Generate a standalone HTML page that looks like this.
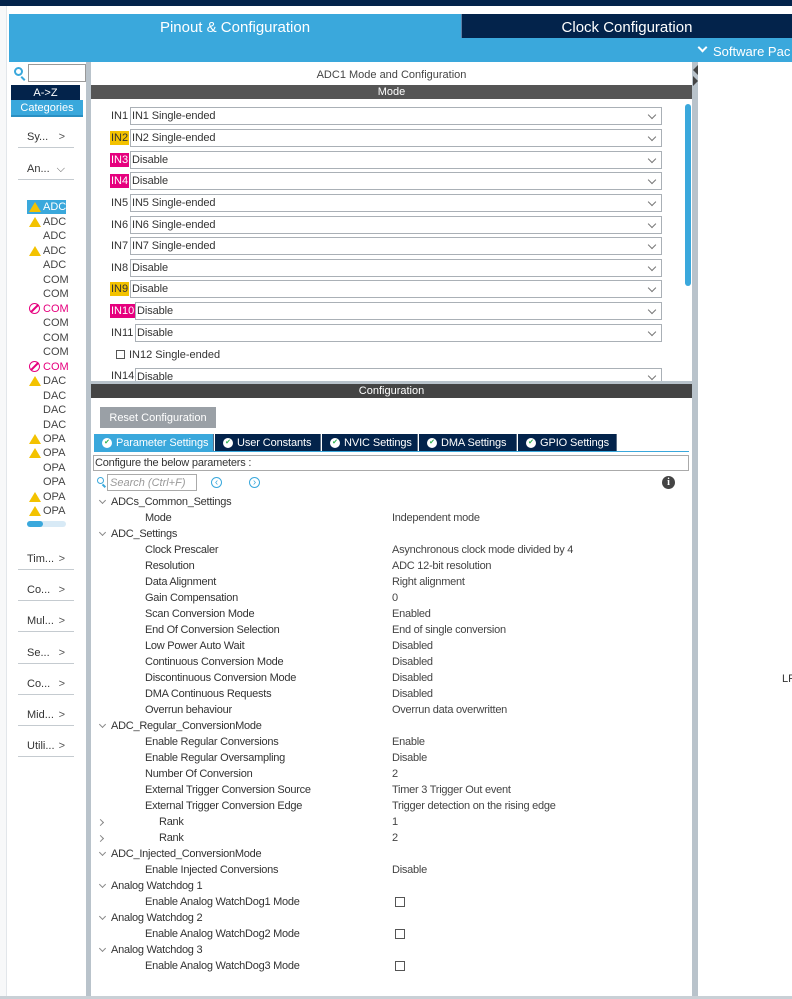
<!DOCTYPE html>
<html><head><meta charset="utf-8"><style>
*{margin:0;padding:0;box-sizing:border-box}
body{width:792px;height:999px;overflow:hidden;background:#fff;font-family:"Liberation Sans",Arial,sans-serif;font-size:11px;color:#333;position:relative}
.a{position:absolute}
.t{position:absolute;white-space:nowrap;line-height:14px}
.dd{position:absolute;left:130px;width:532px;height:18px;border:1px solid #aab0b6;background:#fff;line-height:17px;padding-left:1px;font-size:11px;letter-spacing:-0.1px}
.dd:after{content:"";position:absolute;right:6px;top:4px;width:5px;height:5px;border-right:1px solid #777;border-bottom:1px solid #777;transform:rotate(45deg)}
.lab{position:absolute;height:14px;line-height:15px;font-size:11px;padding:0 1px}
.cat{position:absolute;left:18px;width:56px;border-bottom:1px solid #c5cbd0;height:22px;font-size:11px;color:#333;padding-left:9px;line-height:22px}
.cat b{position:absolute;right:9px;top:0;font-weight:normal;color:#555}
.li{position:absolute;left:43px;font-size:11px;line-height:15px;color:#444}
.w{position:absolute;left:29px;width:0;height:0;border-left:6px solid transparent;border-right:6px solid transparent;border-bottom:10px solid #f3c200}
.n{position:absolute;left:29px;width:11px;height:11px;border:1.5px solid #e6007e;border-radius:50%}
.n:after{content:"";position:absolute;left:4px;top:-1px;width:1.5px;height:10px;background:#e6007e;transform:rotate(45deg)}
.tab{position:absolute;top:434px;height:18px;background:#03234b;color:#fff;font-size:11px;line-height:19px;padding-left:22px;border-right:1px solid #5a6d85;letter-spacing:-0.1px}
.tab:before{content:"✔";position:absolute;left:8px;top:4px;width:10px;height:10px;border-radius:50%;background:#fff;color:#2bb24c;font-size:7px;line-height:10px;text-align:center}
.r{position:absolute;white-space:nowrap;font-size:11px;line-height:15px;color:#333;letter-spacing:-0.25px}
.v{position:absolute;left:392px;white-space:nowrap;font-size:11px;line-height:15px;color:#444;letter-spacing:-0.25px}
.cv{position:absolute;left:100px;width:5px;height:5px;border-right:1px solid #888;border-bottom:1px solid #888;transform:rotate(45deg)}
.cr{position:absolute;left:98px;width:5px;height:5px;border-right:1px solid #888;border-bottom:1px solid #888;transform:rotate(-45deg)}
.cb{position:absolute;left:395px;width:10px;height:10px;border:1px solid #555}
</style></head><body>
<div class="a" style="left:0;top:0;width:792px;height:6px;background:#03234b"></div>
<div class="a" style="left:0;top:6px;width:7px;height:993px;background:#f7f8f9;border-right:1px solid #e2e6ea"></div>
<div class="a" style="left:9px;top:14px;width:452px;height:24px;background:#3aa8dc;color:#fff;font-size:15px;text-align:center;line-height:28px">Pinout &amp; Configuration</div>
<div class="a" style="left:461px;top:14px;width:331px;height:24px;background:#03234b;color:#fff;font-size:15px;text-align:center;line-height:28px;border-left:1px solid #5a80a8">Clock Configuration</div>
<div class="a" style="left:9px;top:38px;width:783px;height:24px;background:#3aa8dc"></div>
<div class="a" style="left:699px;top:44px;width:7px;height:7px;border-right:2px solid #fff;border-bottom:2px solid #fff;transform:rotate(45deg)"></div>
<div class="t" style="left:713px;top:45px;color:#fff;font-size:13px">Software Pac</div>
<!-- left panel -->
<div class="a" style="left:9px;top:62px;width:77px;height:934px;background:#fff"></div>
<div class="a" style="left:14px;top:67px;width:9px;height:9px;border:2px solid #3aa8dc;border-radius:50%"></div>
<div class="a" style="left:22px;top:76px;width:2px;height:5px;background:#3aa8dc;transform:rotate(-45deg)"></div>
<div class="a" style="left:28px;top:64px;width:58px;height:18px;border:1px solid #999;background:#fff"></div>
<div class="a" style="left:11px;top:85px;width:69px;height:15px;background:#03234b;color:#fff;text-align:center;line-height:16px;font-size:11px">A-&gt;Z</div>
<div class="a" style="left:11px;top:100px;width:72px;height:17px;background:#3aa8dc;color:#fff;text-align:center;line-height:17px;font-size:11px;border-bottom:2px solid #2a8fc2">Categories</div>
<div class="cat" style="top:126px">Sy... <b>&gt;</b></div>
<div class="cat" style="top:158px">An... <b>⌵</b></div>
<div class="a" style="left:27px;top:200px;width:39px;height:14px;background:#3aa8dc"></div>
<div class="w" style="top:202px"></div><div class="li" style="top:200px;color:#fff">ADC</div>
<div class="w" style="top:217px"></div><div class="li" style="top:215px">ADC</div>
<div class="li" style="top:229px">ADC</div>
<div class="w" style="top:246px"></div><div class="li" style="top:244px">ADC</div>
<div class="li" style="top:258px">ADC</div>
<div class="li" style="top:273px">COM</div>
<div class="li" style="top:287px">COM</div>
<div class="n" style="top:303px"></div><div class="li" style="top:302px;color:#e6007e">COM</div>
<div class="li" style="top:316px">COM</div>
<div class="li" style="top:331px">COM</div>
<div class="li" style="top:345px">COM</div>
<div class="n" style="top:361px"></div><div class="li" style="top:360px;color:#e6007e">COM</div>
<div class="w" style="top:376px"></div><div class="li" style="top:374px">DAC</div>
<div class="li" style="top:389px">DAC</div>
<div class="li" style="top:403px">DAC</div>
<div class="li" style="top:418px">DAC</div>
<div class="w" style="top:434px"></div><div class="li" style="top:432px">OPA</div>
<div class="w" style="top:448px"></div><div class="li" style="top:446px">OPA</div>
<div class="li" style="top:461px">OPA</div>
<div class="li" style="top:475px">OPA</div>
<div class="w" style="top:492px"></div><div class="li" style="top:490px">OPA</div>
<div class="w" style="top:506px"></div><div class="li" style="top:504px">OPA</div>
<div class="a" style="left:27px;top:521px;width:39px;height:6px;background:#d8eaf6;border-radius:3px"></div>
<div class="a" style="left:27px;top:521px;width:16px;height:6px;background:#3aa8dc;border-radius:3px"></div>
<div class="cat" style="top:548px">Tim... <b>&gt;</b></div>
<div class="cat" style="top:579px">Co... <b>&gt;</b></div>
<div class="cat" style="top:610px">Mul... <b>&gt;</b></div>
<div class="cat" style="top:642px">Se... <b>&gt;</b></div>
<div class="cat" style="top:673px">Co... <b>&gt;</b></div>
<div class="cat" style="top:704px">Mid... <b>&gt;</b></div>
<div class="cat" style="top:735px">Utili... <b>&gt;</b></div>
<!-- separators -->
<div class="a" style="left:86px;top:62px;width:5px;height:934px;background:#b9c3cb"></div>
<div class="a" style="left:692px;top:62px;width:6px;height:934px;background:#b9c3cb"></div>
<div class="a" style="left:693px;top:65px;width:0;height:0;border-top:5px solid transparent;border-bottom:5px solid transparent;border-right:5px solid #444"></div>
<div class="a" style="left:693px;top:76px;width:0;height:0;border-top:5px solid transparent;border-bottom:5px solid transparent;border-left:5px solid #444"></div>
<div class="a" style="left:0;top:996px;width:792px;height:3px;background:#c9d0d6"></div>
<!-- mode panel -->
<div class="t" style="left:91px;width:601px;top:68px;text-align:center;color:#444">ADC1 Mode and Configuration</div>
<div class="a" style="left:91px;top:85px;width:601px;height:14px;background:#555;color:#fff;text-align:center;line-height:15px">Mode</div>
<div class="a" style="left:685px;top:104px;width:6px;height:182px;background:#3aa8dc;border-radius:3px"></div>
<div class="lab" style="left:110px;top:109px">IN1</div><div class="dd" style="top:107px">IN1 Single-ended</div>
<div class="lab" style="left:110px;top:131px;background:#f3c200">IN2</div><div class="dd" style="top:129px">IN2 Single-ended</div>
<div class="lab" style="left:110px;top:153px;background:#e6007e;color:#fff">IN3</div><div class="dd" style="top:151px">Disable</div>
<div class="lab" style="left:110px;top:174px;background:#e6007e;color:#fff">IN4</div><div class="dd" style="top:172px">Disable</div>
<div class="lab" style="left:110px;top:196px">IN5</div><div class="dd" style="top:194px">IN5 Single-ended</div>
<div class="lab" style="left:110px;top:218px">IN6</div><div class="dd" style="top:216px">IN6 Single-ended</div>
<div class="lab" style="left:110px;top:239px">IN7</div><div class="dd" style="top:237px">IN7 Single-ended</div>
<div class="lab" style="left:110px;top:261px">IN8</div><div class="dd" style="top:259px">Disable</div>
<div class="lab" style="left:110px;top:282px;background:#f3c200">IN9</div><div class="dd" style="top:280px">Disable</div>
<div class="lab" style="left:110px;top:304px;background:#e6007e;color:#fff">IN10</div><div class="dd" style="top:302px;left:135px;width:527px">Disable</div>
<div class="lab" style="left:110px;top:326px">IN11</div><div class="dd" style="top:324px;left:135px;width:527px">Disable</div>
<div class="a" style="left:116px;top:350px;width:9px;height:9px;border:1px solid #555"></div>
<div class="t" style="left:129px;top:348px">IN12 Single-ended</div>
<div class="a" style="left:91px;top:366px;width:594px;height:15px;overflow:hidden">
<div class="lab" style="left:19px;top:3px">IN14</div><div class="dd" style="top:2px;left:44px;width:527px">Disable</div></div>
<div class="a" style="left:91px;top:381px;width:601px;height:3px;background:#b9c3cb"></div>
<!-- config -->
<div class="a" style="left:91px;top:384px;width:601px;height:14px;background:#444;color:#fff;text-align:center;line-height:15px">Configuration</div>
<div class="a" style="left:100px;top:407px;width:116px;height:21px;background:#9aa0a6;color:#fff;text-align:center;line-height:22px">Reset Configuration</div>
<div class="tab" style="left:94px;width:120px;background:#3aa8dc">Parameter Settings</div>
<div class="tab" style="left:215px;width:106px">User Constants</div>
<div class="tab" style="left:322px;width:96px">NVIC Settings</div>
<div class="tab" style="left:419px;width:98px">DMA Settings</div>
<div class="tab" style="left:518px;width:99px">GPIO Settings</div>
<div class="a" style="left:94px;top:451px;width:595px;height:1px;background:#3aa8dc"></div>
<div class="a" style="left:93px;top:455px;width:596px;height:16px;border:1px solid #aaa;line-height:15px;padding-left:1px;color:#333;letter-spacing:-0.2px">Configure the below parameters :</div>
<div class="a" style="left:97px;top:477px;width:7px;height:7px;border:1.5px solid #3aa8dc;border-radius:50%"></div>
<div class="a" style="left:103px;top:484px;width:1.5px;height:4px;background:#3aa8dc;transform:rotate(-45deg)"></div>
<div class="a" style="left:107px;top:474px;width:90px;height:17px;border:1px solid #aaa;color:#999;font-style:italic;line-height:16px;padding-left:2px">Search (Ctrl+F)</div>
<div class="a" style="left:211px;top:477px;width:11px;height:11px;border:1px solid #3aa8dc;border-radius:50%;color:#3aa8dc;font-size:10px;line-height:9px;text-align:center">‹</div>
<div class="a" style="left:249px;top:477px;width:11px;height:11px;border:1px solid #3aa8dc;border-radius:50%;color:#3aa8dc;font-size:10px;line-height:9px;text-align:center">›</div>
<div class="a" style="left:662px;top:476px;width:13px;height:13px;background:#444;border-radius:50%;color:#fff;font-size:10px;font-weight:bold;line-height:13px;text-align:center;font-family:'Liberation Serif',serif">i</div>

<div class="cv" style="top:498px"></div><div class="r" style="left:111px;top:495px">ADCs_Common_Settings</div>
<div class="r" style="left:145px;top:511px">Mode</div><div class="v" style="top:511px">Independent mode</div>
<div class="cv" style="top:530px"></div><div class="r" style="left:111px;top:527px">ADC_Settings</div>
<div class="r" style="left:145px;top:543px">Clock Prescaler</div><div class="v" style="top:543px">Asynchronous clock mode divided by 4</div>
<div class="r" style="left:145px;top:559px">Resolution</div><div class="v" style="top:559px">ADC 12-bit resolution</div>
<div class="r" style="left:145px;top:575px">Data Alignment</div><div class="v" style="top:575px">Right alignment</div>
<div class="r" style="left:145px;top:591px">Gain Compensation</div><div class="v" style="top:591px">0</div>
<div class="r" style="left:145px;top:607px">Scan Conversion Mode</div><div class="v" style="top:607px">Enabled</div>
<div class="r" style="left:145px;top:623px">End Of Conversion Selection</div><div class="v" style="top:623px">End of single conversion</div>
<div class="r" style="left:145px;top:639px">Low Power Auto Wait</div><div class="v" style="top:639px">Disabled</div>
<div class="r" style="left:145px;top:655px">Continuous Conversion Mode</div><div class="v" style="top:655px">Disabled</div>
<div class="r" style="left:145px;top:671px">Discontinuous Conversion Mode</div><div class="v" style="top:671px">Disabled</div>
<div class="r" style="left:145px;top:687px">DMA Continuous Requests</div><div class="v" style="top:687px">Disabled</div>
<div class="r" style="left:145px;top:703px">Overrun behaviour</div><div class="v" style="top:703px">Overrun data overwritten</div>
<div class="cv" style="top:722px"></div><div class="r" style="left:111px;top:719px">ADC_Regular_ConversionMode</div>
<div class="r" style="left:145px;top:735px">Enable Regular Conversions</div><div class="v" style="top:735px">Enable</div>
<div class="r" style="left:145px;top:751px">Enable Regular Oversampling</div><div class="v" style="top:751px">Disable</div>
<div class="r" style="left:145px;top:767px">Number Of Conversion</div><div class="v" style="top:767px">2</div>
<div class="r" style="left:145px;top:783px">External Trigger Conversion Source</div><div class="v" style="top:783px">Timer 3 Trigger Out event</div>
<div class="r" style="left:145px;top:799px">External Trigger Conversion Edge</div><div class="v" style="top:799px">Trigger detection on the rising edge</div>
<div class="cr" style="top:820px"></div><div class="r" style="left:159px;top:815px">Rank</div><div class="v" style="top:815px">1</div>
<div class="cr" style="top:836px"></div><div class="r" style="left:159px;top:831px">Rank</div><div class="v" style="top:831px">2</div>
<div class="cv" style="top:850px"></div><div class="r" style="left:111px;top:847px">ADC_Injected_ConversionMode</div>
<div class="r" style="left:145px;top:863px">Enable Injected Conversions</div><div class="v" style="top:863px">Disable</div>
<div class="cv" style="top:882px"></div><div class="r" style="left:111px;top:879px">Analog Watchdog 1</div>
<div class="r" style="left:145px;top:895px">Enable Analog WatchDog1 Mode</div><div class="cb" style="top:897px"></div>
<div class="cv" style="top:914px"></div><div class="r" style="left:111px;top:911px">Analog Watchdog 2</div>
<div class="r" style="left:145px;top:927px">Enable Analog WatchDog2 Mode</div><div class="cb" style="top:929px"></div>
<div class="cv" style="top:946px"></div><div class="r" style="left:111px;top:943px">Analog Watchdog 3</div>
<div class="r" style="left:145px;top:959px">Enable Analog WatchDog3 Mode</div><div class="cb" style="top:961px"></div>
<div class="t" style="left:782px;top:672px;color:#333">LF</div>
</body></html>
